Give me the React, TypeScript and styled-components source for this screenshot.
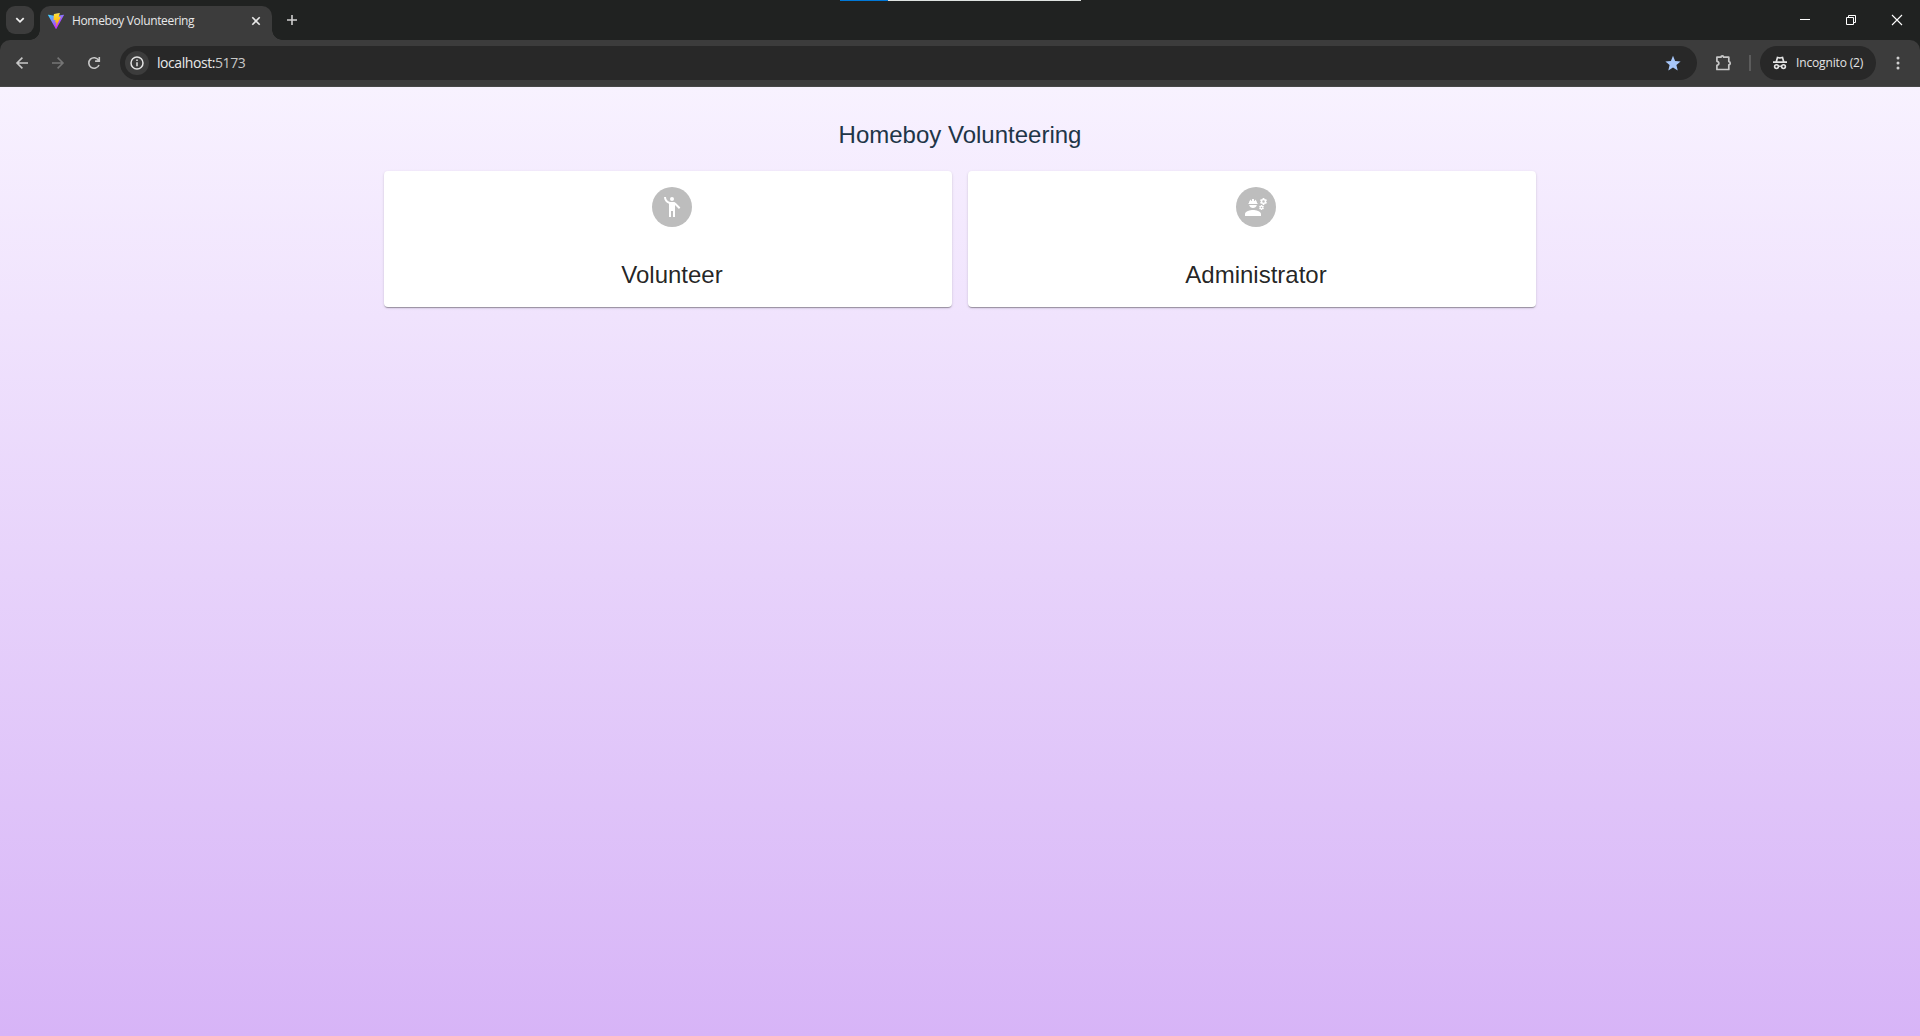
import React from 'react';
import styled, { createGlobalStyle } from 'styled-components';
import { MdEmojiPeople, MdEngineering } from 'react-icons/md';

const GlobalStyle = createGlobalStyle`
  * { box-sizing: border-box; }
  body { margin: 0; background: #202221; }
`;

const uiFont = `"Open Sans", "Noto Sans", sans-serif`;

const Window = styled.div`
  height: 1036px;
  display: flex;
  flex-direction: column;
  background: #202221;
  overflow: hidden;
`;

const TabStrip = styled.header`
  position: relative;
  height: 40px;
  display: flex;
  align-items: flex-start;
  padding: 6px 0 0 6px;
  color: #e8e8e8;
`;

const TopMarker = styled.div`
  position: absolute;
  top: 0;
  left: 840px;
  width: 241px;
  height: 1px;
  background: linear-gradient(to right, #0078d7 48px, #dfe3e1 48px);
`;

const TabSearch = styled.div`
  width: 28px;
  height: 28px;
  border-radius: 9px;
  background: #3c3c3c;
  display: flex;
  align-items: center;
  justify-content: center;
`;

const Tab = styled.div`
  position: relative;
  width: 232px;
  height: 34px;
  margin-left: 6px;
  padding: 0 11px 5px 8px;
  display: flex;
  align-items: center;
  border-radius: 10px 10px 0 0;
  background: #3c3c3c;
  &::before,
  &::after {
    content: '';
    position: absolute;
    bottom: 0;
    width: 10px;
    height: 10px;
  }
  &::before {
    left: -10px;
    background: radial-gradient(circle at 0 0, transparent 9.5px, #3c3c3c 10px);
  }
  &::after {
    right: -10px;
    background: radial-gradient(circle at 100% 0, transparent 9.5px, #3c3c3c 10px);
  }
`;

const TabTitle = styled.span`
  flex: 1;
  margin-left: 8px;
  font: 12px/16px ${uiFont};
  letter-spacing: -0.35px;
  white-space: nowrap;
`;

const NewTab = styled.div`
  margin: 8px 0 0 14px;
  display: flex;
`;

const WindowButtons = styled.div`
  margin-left: auto;
  display: flex;
  svg { width: 46px; height: 28px; }
`;

const Toolbar = styled.div`
  height: 47px;
  padding: 6px 14px 7px 12px;
  display: flex;
  align-items: center;
  border-radius: 10px 10px 0 0;
  background: #3c3c3c;
  border-bottom: 1px solid #474747;
`;

const NavButtons = styled.div`
  display: flex;
  gap: 16px;
  margin-right: 16px;
`;

const AddressBar = styled.div`
  flex: 1;
  height: 34px;
  margin-right: 18px;
  padding: 0 15px 0 5px;
  display: flex;
  align-items: center;
  border-radius: 17px;
  background: #282828;
`;

const SiteInfo = styled.div`
  width: 24px;
  height: 24px;
  border-radius: 50%;
  background: #3c3c3c;
  display: flex;
`;

const Url = styled.span`
  flex: 1;
  margin-left: 8px;
  color: #e8e8e8;
  font: 14px/20px ${uiFont};
  letter-spacing: -0.43px;
`;

const Port = styled.span`
  color: #c7c7c7;
`;

const Divider = styled.div`
  width: 2px;
  height: 16px;
  margin: 0 9px 0 16px;
  background: #5c5c5c;
`;

const Incognito = styled.div`
  width: 116px;
  height: 34px;
  padding-left: 12px;
  display: flex;
  align-items: center;
  gap: 8px;
  border-radius: 17px;
  background: #282828;
  color: #e3e3e3;
  font: 12px/16px ${uiFont};
  letter-spacing: -0.15px;
  white-space: nowrap;
  margin-right: 14px;
`;

const Page = styled.main`
  flex: 1;
  padding-top: 32px;
  background: linear-gradient(to bottom, #f8f2ff, #d7b4f7);
  font-family: "Liberation Sans", Arial, sans-serif;
`;

const Title = styled.h1`
  margin: 0 0 20px;
  color: #213547;
  font-size: 24px;
  font-weight: 400;
  line-height: 32px;
  text-align: center;
`;

const Cards = styled.div`
  width: 1152px;
  margin: 0 auto;
  display: grid;
  grid-template-columns: 1fr 1fr;
  gap: 16px;
`;

const Card = styled.section`
  height: 136px;
  padding: 16px 16px 16px 24px;
  display: flex;
  flex-direction: column;
  align-items: center;
  border-radius: 4px;
  background: #fff;
  color: rgba(0, 0, 0, 0.87);
  box-shadow: 0 2px 1px -1px rgba(0, 0, 0, 0.2), 0 1px 1px 0 rgba(0, 0, 0, 0.14),
    0 1px 3px 0 rgba(0, 0, 0, 0.12);
`;

const Avatar = styled.div`
  width: 40px;
  height: 40px;
  border-radius: 50%;
  display: flex;
  align-items: center;
  justify-content: center;
  background: #bdbdbd;
  color: #fff;
  font-size: 24px;
`;

const Role = styled.h2`
  margin: 32px 0 0;
  font-size: 24px;
  font-weight: 400;
  line-height: 32px;
`;

const ViteLogo = () => (
  <svg width="16" height="16" viewBox="0 0 256 257">
    <defs>
      <linearGradient id="body" x1="-.8%" x2="57.6%" y1="7.7%" y2="78.4%">
        <stop offset="0" stopColor="#41D1FF" />
        <stop offset="1" stopColor="#BD34FE" />
      </linearGradient>
      <linearGradient id="bolt" x1="43.4%" x2="50.3%" y1="2.2%" y2="89%">
        <stop offset="0" stopColor="#FFEA83" />
        <stop offset=".083" stopColor="#FFDD35" />
        <stop offset="1" stopColor="#FFA800" />
      </linearGradient>
    </defs>
    <path fill="url(#body)" d="M255.153 37.938 134.897 252.976c-2.483 4.44-8.862 4.466-11.382.048L.875 37.958c-2.746-4.814 1.371-10.646 6.827-9.67l120.385 21.517a6.537 6.537 0 0 0 2.322-.004l117.867-21.483c5.438-.991 9.574 4.796 6.877 9.62Z" />
    <path fill="url(#bolt)" d="M185.432.063 96.44 17.501a3.268 3.268 0 0 0-2.634 3.014l-5.474 92.456a3.268 3.268 0 0 0 3.997 3.378l24.777-5.718c2.318-.535 4.413 1.507 3.936 3.838l-7.361 36.047c-.495 2.426 1.782 4.5 4.151 3.78l15.304-4.649c2.372-.72 4.652 1.36 4.15 3.788l-11.698 56.621c-.732 3.542 3.979 5.473 5.943 2.437l1.313-2.028 72.516-144.72c1.215-2.423-.88-5.186-3.54-4.672l-25.505 4.922c-2.396.462-4.435-1.77-3.759-4.114l16.646-57.705c.677-2.35-1.37-4.583-3.769-4.113Z" />
  </svg>
);

const stroke = { fill: 'none', stroke: '#c7c7c7', strokeWidth: 1.6 };

export default function App() {
  return (
    <>
      <GlobalStyle />
      <Window>
        <TabStrip>
          <TopMarker />
          <TabSearch>
            <svg width="12" height="12" viewBox="0 0 12 12">
              <path d="M2.3 4.2 6 7.8l3.7-3.6" fill="none" stroke="#f0f0f0" strokeWidth="1.8" />
            </svg>
          </TabSearch>
          <Tab>
            <ViteLogo />
            <TabTitle>Homeboy Volunteering</TabTitle>
            <svg width="10" height="10" viewBox="0 0 10 10">
              <path d="m1.3 1.3 7.4 7.4m0-7.4L1.3 8.7" fill="none" stroke="#e8e8e8" strokeWidth="1.6" />
            </svg>
          </Tab>
          <NewTab>
            <svg width="12" height="12" viewBox="0 0 12 12">
              <path d="M6 1v10M1 6h10" fill="none" stroke="#d0d0d0" strokeWidth="1.6" />
            </svg>
          </NewTab>
          <WindowButtons>
            <svg viewBox="0 0 46 28"><path d="M18 13.5h10" fill="none" stroke="#fff" /></svg>
            <svg viewBox="0 0 46 28">
              <path d="M18.5 11.5h7v7h-7zM20.5 11.5v-2h7v7h-2" fill="none" stroke="#fff" />
            </svg>
            <svg viewBox="0 0 46 28"><path d="m18 9 10 10m0-10L18 19" fill="none" stroke="#fff" strokeWidth="1.1" /></svg>
          </WindowButtons>
        </TabStrip>
        <Toolbar>
          <NavButtons>
            <svg width="20" height="20" viewBox="0 0 20 20"><path d="M16 10H5m5.4-5.4L5 10l5.4 5.4" {...stroke} /></svg>
            <svg width="20" height="20" viewBox="0 0 20 20"><path d="M4 10h11M9.6 4.6 15 10l-5.4 5.4" {...stroke} stroke="#757575" /></svg>
            <svg width="20" height="20" viewBox="0 0 20 20">
              <path d="M15 12a5.3 5.3 0 1 1-.4-4.8M15.3 4v4.1h-4.2" {...stroke} />
            </svg>
          </NavButtons>
          <AddressBar>
            <SiteInfo>
              <svg width="24" height="24" viewBox="0 0 24 24">
                <circle cx="12" cy="12" r="6" fill="none" stroke="#e3e3e3" strokeWidth="1.5" />
                <path d="M12 11.2v4M12 8.5v1.5" stroke="#e3e3e3" strokeWidth="1.5" />
              </svg>
            </SiteInfo>
            <Url>localhost:<Port>5173</Port></Url>
            <svg width="18" height="18" viewBox="0 0 18 18">
              <path fill="#a8c7fa" d="m9 1.8 2.1 5.1 5.5.5-4.2 3.6 1.3 5.5L9 13.6l-4.7 2.9L5.6 11 1.4 7.4l5.5-.5z" />
            </svg>
          </AddressBar>
          <svg width="18" height="20" viewBox="0 0 18 20">
            <path d="M1.9 4.2H6c0-1.7 2.6-1.7 2.6 0h5.2v4.4c1.9.2 1.9 3 0 3.2v4.7H1.9v-4.1c2.6-.3 2.6-3.8 0-4.1z" fill="none" stroke="#c7c7c7" strokeWidth="1.7" strokeLinejoin="round" />
          </svg>
          <Divider />
          <Incognito>
            <svg width="16" height="16" viewBox="0 0 16 16">
              <path d="M1 7.2h14M4.3 6.8l1.2-4.4L8 3l2.5-.6 1.2 4.4" fill="none" stroke="#e3e3e3" strokeWidth="1.7" />
              <circle cx="4.5" cy="11.6" r="1.9" fill="none" stroke="#e3e3e3" strokeWidth="1.6" />
              <circle cx="11.5" cy="11.6" r="1.9" fill="none" stroke="#e3e3e3" strokeWidth="1.6" />
              <path d="M6.3 11.2h3.4" stroke="#e3e3e3" strokeWidth="1.3" />
            </svg>
            Incognito (2)
          </Incognito>
          <svg width="16" height="16" viewBox="0 0 16 16" fill="#d0d0d0">
            <circle cx="8" cy="3" r="1.5" />
            <circle cx="8" cy="8" r="1.5" />
            <circle cx="8" cy="13" r="1.5" />
          </svg>
        </Toolbar>
        <Page>
          <Title>Homeboy Volunteering</Title>
          <Cards>
            <Card>
              <Avatar><MdEmojiPeople /></Avatar>
              <Role>Volunteer</Role>
            </Card>
            <Card>
              <Avatar><MdEngineering /></Avatar>
              <Role>Administrator</Role>
            </Card>
          </Cards>
        </Page>
      </Window>
    </>
  );
}
